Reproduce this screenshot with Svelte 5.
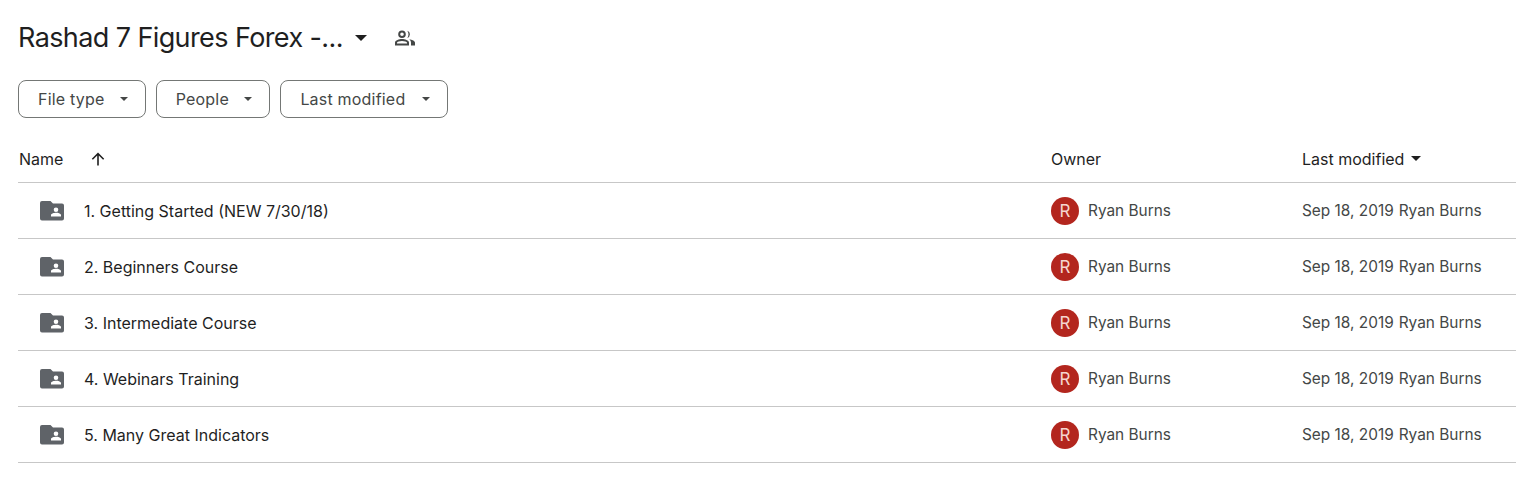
<script>
	const filters = [
		{ label: 'File type', width: 127.7 },
		{ label: 'People', width: 114.7 },
		{ label: 'Last modified', width: 167.7 }
	];

	const folders = [
		'1. Getting Started (NEW 7/30/18)',
		'2. Beginners Course',
		'3. Intermediate Course',
		'4. Webinars Training',
		'5. Many Great Indicators'
	];
</script>

<div class="page">
	<div class="title-row">
		<h1>Rashad 7 Figures Forex -...</h1>
		<svg class="title-caret" width="12" height="6" viewBox="0 0 12 6"><path d="M0 0h12L6 6z" /></svg>
		<svg class="shared" width="24" height="24" viewBox="0 0 24 24">
			<path d="M9 4.500a3.800 3.800 0 1 1 0 7.600 3.800 3.800 0 0 1 0-7.600zm0 2a1.800 1.800 0 1 0 0 3.600 1.800 1.800 0 0 0 0-3.600z" />
			<path d="M9 13c2.700 0 7 1.300 7 3.700V19.500H2v-2.800C2 14.300 6.300 13 9 13zm0 2c-2.300 0-5 .9-5 1.700v.8h10v-.8c0-.8-2.700-1.700-5-1.700z" />
			<path d="M14.300 4.700a3.800 3.800 0 0 1 0 7.200c.8-1 1.200-2.300 1.200-3.600s-.4-2.600-1.200-3.600z" />
			<path d="M16.300 13.300c2.500.5 5.700 1.500 5.700 3.400v2.800h-4v-2.800c0-1.400-.7-2.500-1.700-3.400z" />
		</svg>
	</div>

	<div class="filters">
		{#each filters as f}
			<button class="chip" style="width: {f.width}px">
				<span>{f.label}</span>
				<i class="chip-caret"></i>
			</button>
		{/each}
	</div>

	<div class="row head">
		<div class="name-head">
			<span>Name</span>
			<svg width="16" height="16" viewBox="0 0 16 16"><path d="M8 1.500 1.800 7.700l1.100 1.100 4.300-4.300v10h1.600v-10l4.300 4.300 1.100-1.100z" /></svg>
		</div>
		<div>Owner</div>
		<div class="modified-head">
			<span>Last modified</span>
			<i class="head-caret"></i>
		</div>
	</div>

	{#each folders as name}
		<div class="row item">
			<div class="name">
				<svg class="folder" width="24" height="24" viewBox="0 0 24 24">
					<path fill-rule="evenodd" d="M2 2h8.500l2.500 2.500h9A2 2 0 0 1 24 6.500V19.500a2 2 0 0 1-2 2H2a2 2 0 0 1-2-2V4a2 2 0 0 1 2-2zM16 8.500a2.300 2.300 0 1 0 0 4.600 2.300 2.300 0 0 0 0-4.600zM11 17.500h10v-1.400c0-1.500-3.300-2.300-5-2.300s-5 .8-5 2.300z" />
				</svg>
				<span>{name}</span>
			</div>
			<div class="owner">
				<span class="avatar">R</span>
				<span class="muted">Ryan Burns</span>
			</div>
			<div class="modified muted">
				<span>Sep 18, 2019</span>
				<span>Ryan Burns</span>
			</div>
		</div>
	{/each}
</div>

<style>
	:global(body) {
		margin: 0;
		background: #fff;
	}

	.page {
		padding: 18px 0 0 18px;
		font-family: Inter, Roboto, sans-serif;
		color: #1f1f1f;
	}

	.title-row {
		display: flex;
		align-items: center;
		height: 40px;
	}

	h1 {
		margin: 0;
		font-size: 27px;
		font-weight: 400;
		line-height: 40px;
		letter-spacing: -0.6px;
		white-space: nowrap;
	}

	.title-caret {
		margin-left: 12px;
		fill: #1f1f1f;
	}

	.shared {
		margin-left: 26px;
		fill: #444746;
	}

	.filters {
		display: flex;
		gap: 10px;
		margin-top: 22px;
	}

	.chip {
		display: flex;
		align-items: center;
		justify-content: space-between;
		height: 38px;
		padding: 0 17px 0 19px;
		background: #fff;
		border: 1px solid #747775;
		border-radius: 8px;
		font: inherit;
		font-size: 16px;
		letter-spacing: 0.2px;
		color: #444746;
		box-sizing: border-box;
	}

	.chip-caret {
		width: 0;
		height: 0;
		border-left: 4px solid transparent;
		border-right: 4px solid transparent;
		border-top: 4px solid #444746;
	}

	.row {
		display: grid;
		grid-template-columns: 1032px 251px 1fr;
		align-items: center;
		box-sizing: border-box;
		border-bottom: 1px solid #c7c7c7;
		font-size: 16px;
	}

	.head {
		height: 47px;
		margin-top: 18px;
		padding-left: 1px;
		padding-bottom: 1px;
		color: #1f1f1f;
	}

	.name-head {
		display: flex;
		align-items: center;
		gap: 27px;
	}

	.name-head svg {
		fill: #1f1f1f;
	}

	.modified-head {
		display: flex;
		align-items: center;
		gap: 7px;
	}

	.head-caret {
		width: 0;
		height: 0;
		border-left: 5.500px solid transparent;
		border-right: 5.500px solid transparent;
		border-top: 5.500px solid #1f1f1f;
	}

	.item {
		height: 56px;
		padding-left: 1px;
		padding-top: 1px;
	}

	.name {
		display: flex;
		align-items: center;
		color: #1f1f1f;
		padding-left: 21px;
		gap: 20px;
	}

	.folder {
		fill: #5f6368;
	}

	.owner {
		display: flex;
		align-items: center;
		gap: 9px;
	}

	.muted {
		color: #444746;
		font-size: 15.400px;
		margin-top: -1px;
	}

	.avatar {
		display: flex;
		align-items: center;
		justify-content: center;
		width: 28px;
		height: 28px;
		border-radius: 50%;
		background: #b3261e;
		color: #f5d5d0;
		font-size: 17px;
	}

	.modified {
		display: flex;
		gap: 5px;
	}
</style>
